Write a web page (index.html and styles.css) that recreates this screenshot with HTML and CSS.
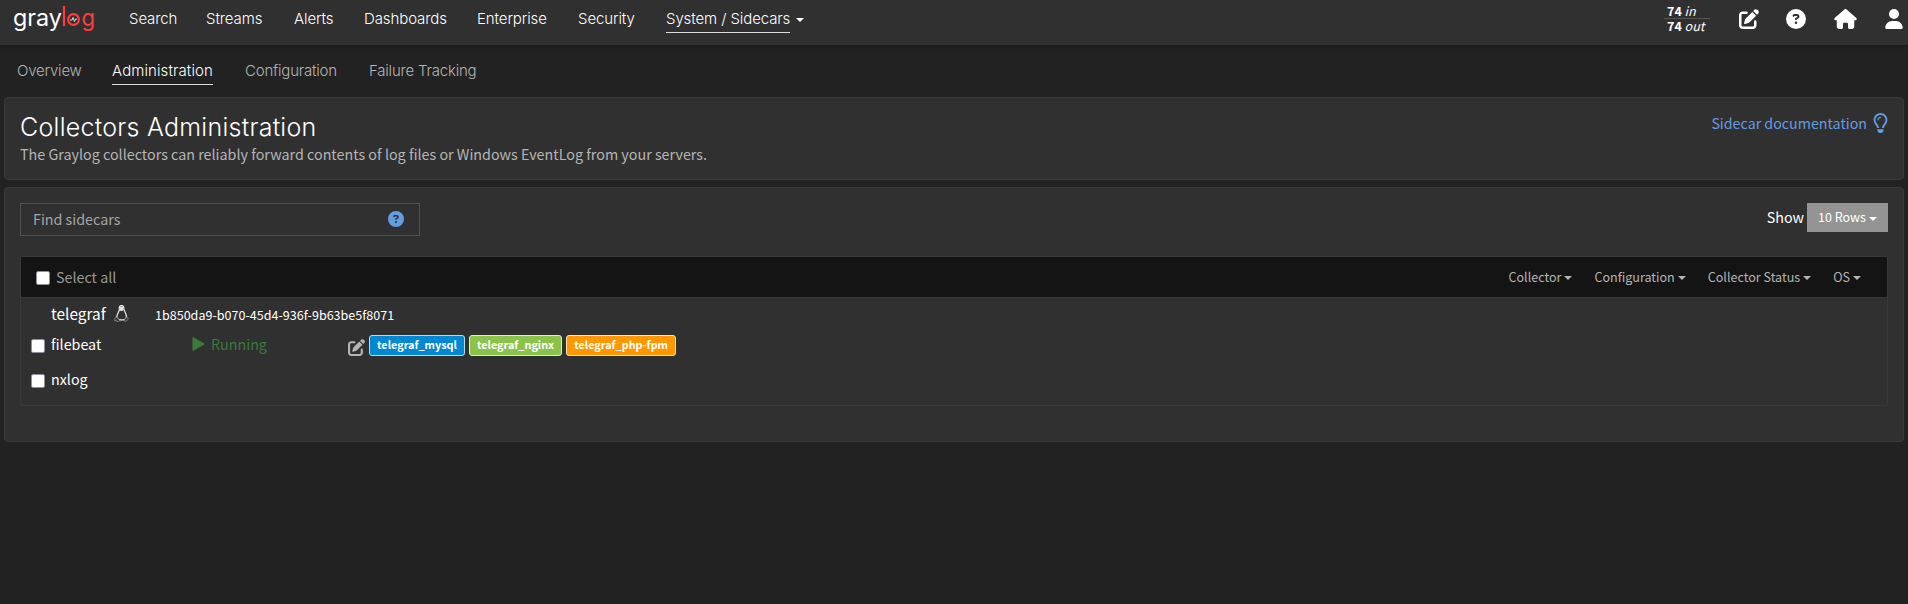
FILE: index.html
```html
<!DOCTYPE html>
<html lang="en">
<head>
<meta charset="utf-8">
<title>Collectors Administration</title>
<link rel="stylesheet" href="styles.css">
</head>
<body>
<svg class="defs" width="0" height="0">
  <symbol id="edit" viewBox="0 0 512 512"><path d="M471.600 21.700c-21.900-21.900-57.300-21.900-79.200 0L362.300 51.700l97.900 97.900 30.100-30.100c21.900-21.900 21.900-57.300 0-79.200L471.600 21.700zm-299.200 220c-6.100 6.100-10.800 13.600-13.500 21.900l-29.600 88.800c-2.900 8.600-.6 18.100 5.800 24.600s15.900 8.700 24.600 5.800l88.800-29.600c8.200-2.700 15.700-7.400 21.900-13.500L437.700 172.300 339.700 74.300 172.400 241.700zM96 64C43 64 0 107 0 160V416c0 53 43 96 96 96H352c53 0 96-43 96-96V320c0-17.700-14.300-32-32-32s-32 14.300-32 32v96c0 17.700-14.300 32-32 32H96c-17.700 0-32-14.300-32-32V160c0-17.700 14.300-32 32-32h96c17.700 0 32-14.300 32-32s-14.300-32-32-32H96z"/></symbol>
  <symbol id="help" viewBox="0 0 512 512"><path d="M256 512A256 256 0 1 0 256 0a256 256 0 1 0 0 512zM169.800 165.300c7.900-22.300 29.100-37.300 52.800-37.300h58.300c34.900 0 63.100 28.300 63.100 63.100c0 22.600-12.100 43.500-31.700 54.800L280 264.400c-.2 13-10.900 23.600-24 23.600c-13.300 0-24-10.700-24-24V250.500c0-8.600 4.600-16.500 12.100-20.800l44.300-25.400c4.700-2.700 7.600-7.700 7.600-13.100c0-8.400-6.800-15.100-15.100-15.100H222.600c-3.400 0-6.400 2.100-7.500 5.300l-.4 1.200c-4.400 12.500-18.200 19-30.600 14.600s-19-18.200-14.600-30.600l.3-1.300zM224 352a32 32 0 1 1 64 0 32 32 0 1 1-64 0z"/></symbol>
  <symbol id="home" viewBox="0 0 576 512"><path d="M575.800 255.500c0 18-15 32.100-32 32.100h-32l.7 160.200c.2 35.500-28.500 64.300-64 64.300H392c-22.100 0-40-17.900-40-40V384c0-17.700-14.300-32-32-32H256c-17.700 0-32 14.300-32 32v88c0 22.100-17.900 40-40 40H128.100c-35.300 0-64-28.700-64-64V287.600H32c-18 0-32-14-32-32.100c0-9 3-17 10-24L266.400 8c7-7 15-8 22-8s15 2 21 7L564.800 231.500c8 7 12 15 11 24z"/></symbol>
  <symbol id="user" viewBox="0 0 448 512"><path d="M224 256A128 128 0 1 0 224 0a128 128 0 1 0 0 256zm-45.700 48C79.800 304 0 383.800 0 482.300C0 498.700 13.300 512 29.700 512H418.300c16.400 0 29.700-13.300 29.700-29.700C448 383.800 368.200 304 269.700 304H178.300z"/></symbol>
  <symbol id="bulb" viewBox="0 0 384 512"><path d="M297.200 248.900C311.600 228.300 320 203.200 320 176c0-70.700-57.300-128-128-128S64 105.300 64 176c0 27.200 8.400 52.300 22.800 72.900c3.700 5.300 8.100 11.300 12.800 17.700c12.900 17.700 28.300 38.900 39.800 59.800c10.400 19 15.700 38.800 18.300 57.500H109c-2.200-12-5.900-23.700-11.800-34.500c-9.900-18-22.200-34.900-34.500-51.800c-5.200-7.100-10.400-14.200-15.400-21.400C27.600 247.900 16 213.300 16 176C16 78.800 94.800 0 192 0s176 78.800 176 176c0 37.300-11.600 71.900-31.400 100.300c-5 7.200-10.200 14.300-15.400 21.400c-12.300 16.800-24.600 33.700-34.500 51.800c-5.900 10.800-9.600 22.500-11.800 34.500H226.400c2.600-18.700 7.900-38.600 18.300-57.500c11.500-20.900 26.900-42.100 39.800-59.800c4.700-6.400 9-12.400 12.700-17.700zM192 128c-26.500 0-48 21.500-48 48c0 8.800-7.200 16-16 16s-16-7.200-16-16c0-44.200 35.800-80 80-80c8.800 0 16 7.200 16 16s-7.200 16-16 16zm0 384c-44.200 0-80-35.800-80-80V416H272v16c0 44.200-35.800 80-80 80z"/></symbol>
</svg>

<header class="topbar">
  <svg class="logo" width="84" height="34" viewBox="0 0 84 34" role="img" aria-label="graylog">
    <text class="logo-gray" x="1" y="22" textLength="49" lengthAdjust="spacingAndGlyphs">gray</text>
    <path d="M52 2v20" stroke="#ff3b3e" stroke-width="2.200"/>
    <circle cx="61.500" cy="15.500" r="5.400" fill="none" stroke="#ff3b3e" stroke-width="2.200"/>
    <path d="M58 16h2l1-2.500 1.500 4 1-2.500h1.500" fill="none" stroke="#ddd" stroke-width="1"/>
    <text class="logo-red" x="69.500" y="22" textLength="13.500" lengthAdjust="spacingAndGlyphs">g</text>
  </svg>
  <nav class="mainnav">
    <a><span>Search</span></a><a><span>Streams</span></a><a><span>Alerts</span></a><a><span>Dashboards</span></a><a><span>Enterprise</span></a><a><span>Security</span></a><a><span class="active">System / Sidecars</span><i class="caret"></i></a>
  </nav>
  <div class="throughput"><div><b>74</b> <em>in</em></div><div><b>74</b> <em>out</em></div></div>
  <div class="tools">
    <svg width="20" height="20"><use href="#edit"/></svg>
    <svg width="20" height="20"><use href="#help"/></svg>
    <svg width="23" height="20"><use href="#home"/></svg>
    <svg width="18" height="20"><use href="#user"/></svg>
  </div>
</header>

<nav class="subnav">
  <a><span>Overview</span></a><a><span class="active">Administration</span></a><a><span>Configuration</span></a><a><span>Failure Tracking</span></a>
</nav>

<section class="card intro">
  <div>
    <h1>Collectors Administration</h1>
    <p>The Graylog collectors can reliably forward contents of log files or Windows EventLog from your servers.</p>
  </div>
  <a class="doc"><span>Sidecar documentation</span><svg width="15" height="20"><use href="#bulb"/></svg></a>
</section>

<section class="card list">
  <div class="controls">
    <div class="search"><span>Find sidecars</span><svg width="16" height="16"><use href="#help"/></svg></div>
    <div class="pagesize"><span>Show</span><button><span>10 Rows</span><i class="caret"></i></button></div>
  </div>
  <div class="table">
    <div class="thead">
      <label><i class="check"></i><span>Select all</span></label>
      <div class="filters">
        <a><span>Collector</span><i class="caret"></i></a><a><span>Configuration</span><i class="caret"></i></a><a><span>Collector Status</span><i class="caret"></i></a><a><span>OS</span><i class="caret"></i></a>
      </div>
    </div>
    <div class="sidecar">
      <span class="name">telegraf</span>
      <svg class="tux" width="15" height="17" viewBox="0 0 15 17">
        <path d="M5.300 4.500C5 1.500 6 .5 7.500.5s2.500 1 2.400 3.500c0 2 2.700 4.500 2.700 8.500l-2 2.300H4.600L2.800 12C3 8 5.400 7 5.300 4.500z" fill="#303030" stroke="#eee" stroke-width="1.200"/>
        <path d="M5.600 1.500h3.800v3.700l-1.900 1-1.900-1z" fill="#e4e4e4"/>
        <path d="M3 12l2.500 3.500-1 1-4-1 .5-2.500zM12.500 12l2 2-3 2.500-1.500-1z" fill="#303030" stroke="#999" stroke-width=".8"/>
      </svg>
      <span class="node">1b850da9-b070-45d4-936f-9b63be5f8071</span>
    </div>
    <div class="collector">
      <i class="check"></i><span class="cname">filebeat</span>
      <span class="status"><svg width="13" height="14" viewBox="0 0 13 14"><path d="M.5 1Q.5 0 1.500.3L12 6.300Q12.800 7 12 7.700L1.500 13.700Q.5 14 .5 13z"/></svg><span>Running</span></span>
      <svg class="pen" width="17" height="17"><use href="#edit"/></svg>
      <div class="tags"><span class="tag blue">telegraf_mysql</span><span class="tag green">telegraf_nginx</span><span class="tag orange">telegraf_php-fpm</span></div>
    </div>
    <div class="collector second"><i class="check"></i><span class="cname">nxlog</span></div>
  </div>
</section>
</body>
</html>
```
FILE: styles.css
```css
* { box-sizing: border-box; }
body {
  margin: 0;
  background: #222;
  color: #fff;
  font: 14.3px/20px "Noto Sans CJK SC", "Noto Sans", sans-serif;
}
.defs { position: absolute; }
svg { fill: currentColor; flex: none; display: block; }
.topbar {
  display: flex;
  height: 45px;
  padding: 0 5px 0 12px;
  background: #303030;
  box-shadow: 0 2px 4px rgba(0, 0, 0, .25);
}
.logo { margin: 4px 33px 0 0; }
.logo text { font: 24px "Inter", sans-serif; }
.logo-gray { fill: #fff; }
.logo-red { fill: #ff3b3e; }
.mainnav, .subnav { display: grid; font: 350 15px/27px "Inter", sans-serif; letter-spacing: -.2px; }
.mainnav { grid-template-columns: 77px 88px 70px 113px 101px 88px auto; height: 33px; padding-top: 5px; letter-spacing: -.1px; }
.mainnav a { display: flex; gap: 6px; align-items: flex-start; }
.mainnav span { line-height: 28px; height: 28px; }
.mainnav .caret { margin-top: 13px; }
.active { display: inline-block; border-bottom: 1px solid #ddd; color: #fff; }
.subnav .active { letter-spacing: .1px; }
.caret { border: 4px solid transparent; border-top-color: currentColor; border-bottom: 0; }
.throughput { margin-left: auto; width: 46px; padding-top: 3px; font-size: 12.500px; line-height: 15px; }
.throughput div { height: 15px; padding-left: 3px; line-height: 16px; }
.throughput div + div { height: 16px; border-top: 1px solid #555; line-height: 14px; }
.tools { display: flex; gap: 27px; margin: 9px 0 0 29px; }
.tools svg:last-child { margin-left: 1px; }
.tools svg:nth-child(3) { margin-left: 1px; }
.subnav { grid-template-columns: 95px 133px 124px auto; height: 52px; padding: 12px 0 0 17px; color: #b5b5b5; }
.card { margin: 0 4px 7px; border: 1px solid #393939; border-radius: 4px; background: #303030; padding: 15px; }
.intro { display: flex; justify-content: space-between; height: 83px; }
h1 { margin: 0; font: 360 25px/29px "Inter", sans-serif; letter-spacing: .26px; }
p { margin: 2px 0 0; color: #b5b5b5; font-size: 14.320px; }
.doc { display: flex; gap: 6px; color: #629de2; font-size: 14.250px; }
.list { height: 255px; }
.controls { display: flex; justify-content: space-between; align-items: flex-start; height: 53px; }
.search { display: flex; justify-content: space-between; align-items: flex-start; width: 400px; height: 33px; padding: 5px 15px 0 12px; border: 1px solid #525252; color: #a5a5a5; }
.search svg { margin-top: 2px; color: #629de2; }
.pagesize { display: flex; gap: 3px; align-items: flex-start; line-height: 28px; }
button { display: flex; align-items: center; gap: 3px; width: 81px; height: 29px; padding: 0 11px; border: 0; background: #949494; color: #fff; font: 12.500px/20px "Noto Sans CJK SC", sans-serif; }
button span { height: 21px; }
button .caret { margin-top: 2px; }
.table { height: 150px; border: 1px solid #393939; border-radius: 2px; }
.thead { display: flex; justify-content: space-between; align-items: center; height: 41px; border-bottom: 1px solid #393939; padding: 0 26px 0 15px; background: #141414; color: #999; }
.thead label { display: flex; align-items: center; gap: 6px; }
.thead .check { margin-top: 2px; }
.check { flex: none; width: 14px; height: 14px; border: 1px solid #8f8f9d; border-radius: 2px; background: #fff; }
.filters { display: flex; gap: 22px; color: #b5b5b5; font-size: 12.560px; }
.filters a { display: flex; align-items: center; gap: 3px; }
.filters .caret { margin-top: 2px; }
.sidecar { display: flex; height: 35px; padding-left: 30px; }
.name { width: 63px; font-size: 15.400px; line-height: 31px; }
.tux { margin-top: 7px; }
.node { margin-left: 26px; font-size: 12.560px; line-height: 33px; }
.collector { display: flex; height: 24px; padding-left: 10px; }
.collector .check { margin: 6px 6px 0 0; }
.cname { width: 141px; line-height: 22px; }
.status { display: flex; gap: 6px; width: 156px; color: #3b7a3b; line-height: 22px; }
.status svg { margin-top: 4px; }
.pen { margin: 6px 4px 0 0; color: #b5b5b5; }
.tags { display: flex; gap: 4px; padding-top: 2px; }
.tag { height: 21px; padding: 0 7px; border: 1px solid #ccc; border-radius: 3px; font-size: 10.820px; font-weight: 700; line-height: 17px; }
.blue { background: #0288d1; border-color: #b3dbf1; }
.green { background: #8bc34a; border-color: #dcedc8; }
.orange { background: #ff9800; border-color: #ffe0b2; }
.second { margin-top: 11px; }
```
